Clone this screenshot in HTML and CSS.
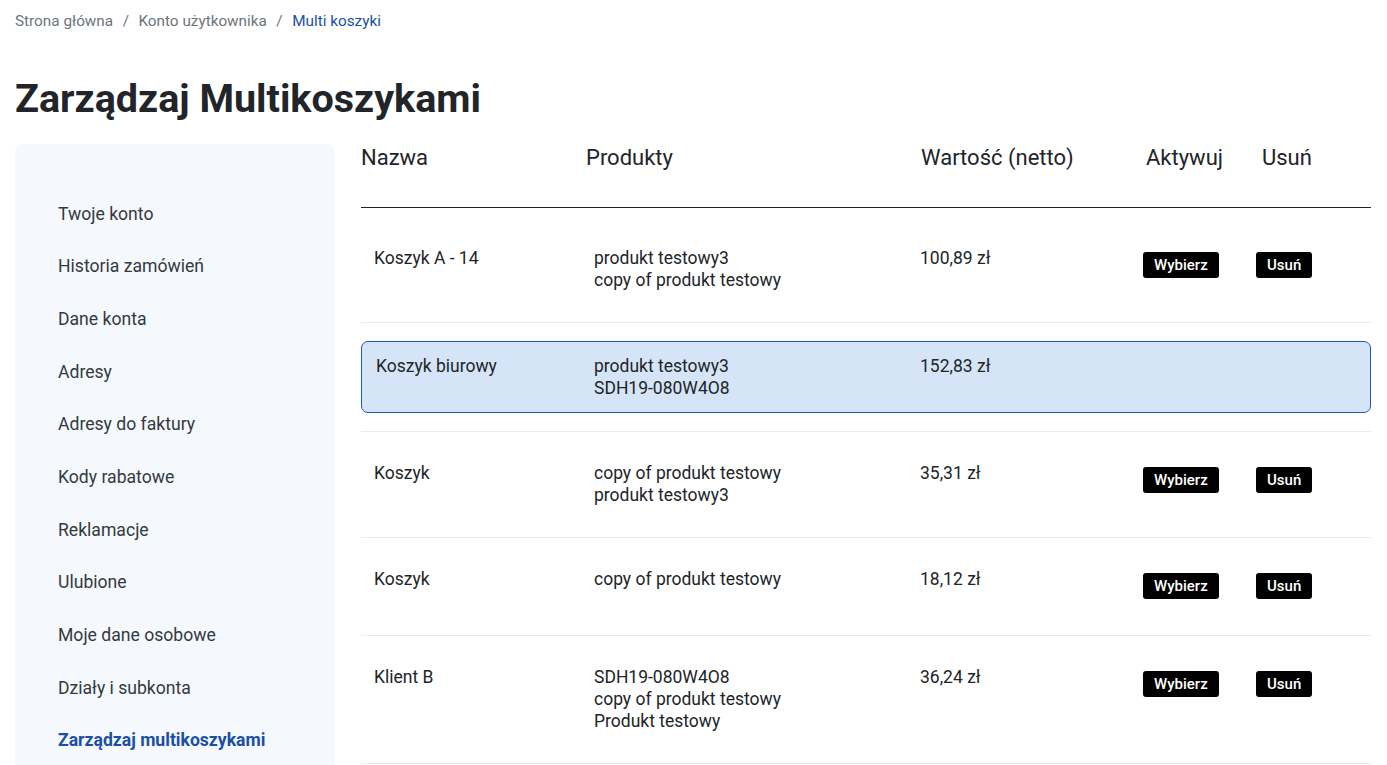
FILE: index.html
```html
<!DOCTYPE html>
<html lang="pl">
<head>
<meta charset="utf-8">
<title>Zarządzaj Multikoszykami</title>
<link rel="stylesheet" href="styles.css">
</head>
<body>
<div class="page">
  <nav class="breadcrumb">
    <a href="#" class="crumb">Strona główna</a>
    <span class="sep">/</span>
    <a href="#" class="crumb">Konto użytkownika</a>
    <span class="sep">/</span>
    <span class="crumb current">Multi koszyki</span>
  </nav>
  <h1 class="title">Zarządzaj Multikoszykami</h1>
  <div class="main">
    <aside class="sidebar">
      <a class="side-item" href="#">Twoje konto</a>
      <a class="side-item" href="#">Historia zamówień</a>
      <a class="side-item" href="#">Dane konta</a>
      <a class="side-item" href="#">Adresy</a>
      <a class="side-item" href="#">Adresy do faktury</a>
      <a class="side-item" href="#">Kody rabatowe</a>
      <a class="side-item" href="#">Reklamacje</a>
      <a class="side-item" href="#">Ulubione</a>
      <a class="side-item" href="#">Moje dane osobowe</a>
      <a class="side-item" href="#">Działy i subkonta</a>
      <a class="side-item active" href="#">Zarządzaj multikoszykami</a>
    </aside>
    <section class="table">
      <div class="thead">
        <div>Nazwa</div>
        <div>Produkty</div>
        <div>Wartość (netto)</div>
        <div>Aktywuj</div>
        <div>Usuń</div>
      </div>
      <div class="tbody">
        <div class="row">
          <div class="cell">Koszyk A - 14</div>
          <div class="cell">produkt testowy3<br>copy of produkt testowy</div>
          <div class="cell">100,89 zł</div>
          <div class="cell btn-cell"><button class="btn">Wybierz</button></div>
          <div class="cell btn-cell"><button class="btn">Usuń</button></div>
        </div>
        <div class="row-active-wrap">
          <div class="row active">
            <div class="cell">Koszyk biurowy</div>
            <div class="cell">produkt testowy3<br>SDH19-080W4O8</div>
            <div class="cell">152,83 zł</div>
            <div class="cell"></div>
            <div class="cell"></div>
          </div>
        </div>
        <div class="row">
          <div class="cell">Koszyk</div>
          <div class="cell">copy of produkt testowy<br>produkt testowy3</div>
          <div class="cell">35,31 zł</div>
          <div class="cell btn-cell"><button class="btn">Wybierz</button></div>
          <div class="cell btn-cell"><button class="btn">Usuń</button></div>
        </div>
        <div class="row">
          <div class="cell">Koszyk</div>
          <div class="cell">copy of produkt testowy</div>
          <div class="cell">18,12 zł</div>
          <div class="cell btn-cell"><button class="btn">Wybierz</button></div>
          <div class="cell btn-cell"><button class="btn">Usuń</button></div>
        </div>
        <div class="row">
          <div class="cell">Klient B</div>
          <div class="cell">SDH19-080W4O8<br>copy of produkt testowy<br>Produkt testowy</div>
          <div class="cell">36,24 zł</div>
          <div class="cell btn-cell"><button class="btn">Wybierz</button></div>
          <div class="cell btn-cell"><button class="btn">Usuń</button></div>
        </div>
      </div>
    </section>
  </div>
</div>
</body>
</html>
```

FILE: styles.css
```css
* { box-sizing: border-box; }
html, body { margin: 0; padding: 0; background: #fff; }
body {
  font-family: Roboto, "Liberation Sans", Arial, sans-serif;
  color: #212529;
  overflow: hidden;
}
.page { padding: 0 16px 0 15px; }

.breadcrumb {
  display: flex;
  align-items: center;
  height: 40px;
  font-size: 15.3px;
  line-height: 20px;
  color: #6c757d;
  padding-top: 1px;
}
.crumb { color: #6c757d; text-decoration: none; }
.crumb.current { color: #1a4fa3; }
.sep { margin: 0 9.5px; color: #6c757d; }

.title {
  margin: 0;
  padding-top: 35px;
  font-size: 39.5px;
  line-height: 48px;
  font-weight: 700;
  color: #212529;
  height: 104px;
}

.main {
  display: flex;
  align-items: flex-start;
  gap: 26px;
}

.sidebar {
  flex: 0 0 320px;
  background: #f5f8fc;
  border-radius: 8px;
  padding: 43.5px 0 40px 43px;
  min-height: 700px;
  display: flex;
  flex-direction: column;
}
.side-item {
  display: block;
  padding: 14.33px 0;
  font-size: 17.6px;
  line-height: 24px;
  color: #333a40;
  text-decoration: none;
}
.side-item.active { color: #1a4fa3; font-weight: 700; }

.table { flex: 1 1 auto; min-width: 0; }
.thead {
  display: grid;
  grid-template-columns: 225px 335px 225px 116px 1fr;
  font-size: 22px;
  line-height: 28px;
  padding-bottom: 35px;
  border-bottom: 1px solid #212529;
  color: #212529;
}
.tbody { padding-top: 9px; }

.row {
  display: grid;
  grid-template-columns: 220px 326px 223px 113px 1fr;
  align-items: start;
  border-bottom: 1px solid #e9ecef;
  font-size: 17.5px;
  line-height: 22px;
}
.cell { padding: 30px 0 31px 13px; }
.btn-cell { padding: 35px 0 36px 13px; }

.row-active-wrap {
  padding: 18px 0;
  border-bottom: 1px solid #e9ecef;
}
.row.active {
  grid-template-columns: 219px 326px 223px 113px 1fr;
  background: #d5e5f7;
  border: 1px solid #1d58b8;
  border-radius: 7px;
}
.row.active .cell { padding: 13px 0 13px 13px; }
.row.active .cell:first-child { padding-left: 14px; }

.btn {
  display: inline-block;
  height: 26px;
  padding: 0 11px;
  border: 0;
  border-radius: 3px;
  background: #000;
  color: #fff;
  font-family: Roboto, "Liberation Sans", Arial, sans-serif;
  font-size: 15px;
  font-weight: 500;
  line-height: 26px;
  cursor: pointer;
}
```
